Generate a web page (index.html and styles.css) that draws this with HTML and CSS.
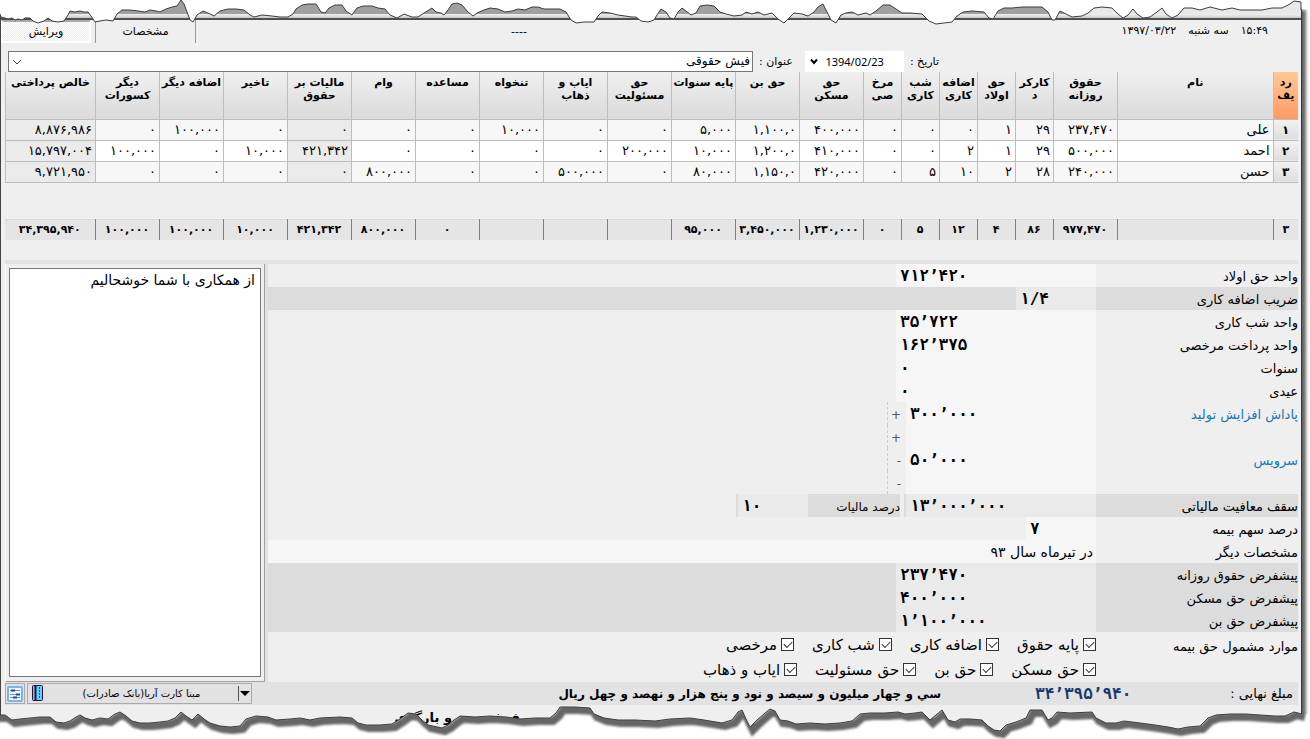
FILE: index.html
```
<!DOCTYPE html>
<html lang="fa" dir="rtl">
<head>
    <meta charset="UTF-8">
    <meta name="viewport" content="width=device-width, initial-scale=1.0">
    <title>فیش حقوقی</title>
    <link rel="stylesheet" href="styles.css">
</head>
<body>
<div class="page">
    <div class="window">
        <div class="titlebar"></div>

        <!-- Tabs and clock -->
        <div class="topbar">
            <div class="clock"><span>۱۵:۴۹</span><span>سه شنبه</span><span>۱۳۹۷/۰۳/۲۲</span></div>
            <div class="dashes">----</div>
            <div class="tabs">
                <button type="button" class="tab">مشخصات</button>
                <button type="button" class="tab tab-active">ویرایش</button>
            </div>
        </div>

        <!-- Date and title -->
        <div class="filters">
            <label for="date">تاریخ :</label>
            <div class="date-box">
                <select id="date"><option>1394/02/23</option></select>
                <svg class="arrow" viewBox="0 0 8 8"><path d="M1 1.5L4 5L7 1.5" fill="none" stroke="#000" stroke-width="2"/></svg>
            </div>
            <label for="title" class="title-label">عنوان :</label>
            <div class="title-box">
                <select id="title"><option>فیش حقوقی</option></select>
                <svg class="arrow" viewBox="0 0 8 8"><path d="M0 2L4 6L8 2" fill="none" stroke="#444"/></svg>
            </div>
        </div>

        <!-- Payroll grid -->
        <table class="grid">
            <colgroup>
                <col class="c-row"><col><col class="c-mid">
                <col class="c-small" span="5">
                <col class="c-mid" span="12">
                <col class="c-net">
            </colgroup>
            <thead>
                <tr>
                    <th class="picked">رد<br>یف</th><th>نام</th><th>حقوق<br>روزانه</th><th>کارکر<br>د</th><th>حق<br>اولاد</th><th>اضافه<br>کاری</th><th>شب<br>کاری</th><th>مرخ<br>صی</th><th>حق<br>مسکن</th><th>حق بن</th><th>پایه سنوات</th><th>حق<br>مسئولیت</th><th>ایاب و<br>ذهاب</th><th>تنخواه</th><th>مساعده</th><th>وام</th><th>مالیات بر<br>حقوق</th><th>تاخیر</th><th>اضافه دیگر</th><th>دیگر<br>کسورات</th><th>خالص پرداختی</th>
                </tr>
            </thead>
            <tbody>
                <tr>
                    <th>۱</th><td>علی</td><td>۲۳۷,۴۷۰</td><td>۲۹</td><td>۱</td><td>۰</td><td>۰</td><td>۰</td><td>۴۰۰,۰۰۰</td><td>۱,۱۰۰,۰</td><td>۵,۰۰۰</td><td>۰</td><td>۰</td><td>۱۰,۰۰۰</td><td>۰</td><td>۰</td><td class="calc">۰</td><td>۰</td><td>۱۰۰,۰۰۰</td><td>۰</td><td class="calc">۸,۸۷۶,۹۸۶</td>
                </tr>
                <tr>
                    <th>۲</th><td>احمد</td><td>۵۰۰,۰۰۰</td><td>۲۹</td><td>۱</td><td>۲</td><td>۰</td><td>۰</td><td>۴۱۰,۰۰۰</td><td>۱,۲۰۰,۰</td><td>۱۰,۰۰۰</td><td>۲۰۰,۰۰۰</td><td>۰</td><td>۰</td><td>۰</td><td>۰</td><td class="calc">۴۲۱,۳۴۲</td><td>۱۰,۰۰۰</td><td>۰</td><td>۱۰۰,۰۰۰</td><td class="calc">۱۵,۷۹۷,۰۰۴</td>
                </tr>
                <tr>
                    <th>۳</th><td>حسن</td><td>۲۴۰,۰۰۰</td><td>۲۸</td><td>۲</td><td>۱۰</td><td>۵</td><td>۰</td><td>۴۲۰,۰۰۰</td><td>۱,۱۵۰,۰</td><td>۸۰,۰۰۰</td><td>۰</td><td>۵۰۰,۰۰۰</td><td>۰</td><td>۰</td><td>۸۰۰,۰۰۰</td><td class="calc">۰</td><td>۰</td><td>۰</td><td>۰</td><td class="calc">۹,۷۲۱,۹۵۰</td>
                </tr>
            </tbody>
        </table>

        <table class="totals">
            <colgroup>
                <col class="c-row"><col><col class="c-mid">
                <col class="c-small" span="5">
                <col class="c-mid" span="12">
                <col class="c-net">
            </colgroup>
            <tbody>
                <tr>
                    <td>۳</td><td></td><td>۹۷۷,۴۷۰</td><td>۸۶</td><td>۴</td><td>۱۲</td><td>۵</td><td>۰</td><td>۱,۲۳۰,۰۰۰</td><td>۳,۴۵۰,۰۰۰</td><td>۹۵,۰۰۰</td><td></td><td></td><td></td><td>۰</td><td>۸۰۰,۰۰۰</td><td>۴۲۱,۳۴۲</td><td>۱۰,۰۰۰</td><td>۱۰۰,۰۰۰</td><td>۱۰۰,۰۰۰</td><td>۳۴,۳۹۵,۹۴۰</td>
                </tr>
            </tbody>
        </table>

        <!-- Details -->
        <div class="details">
            <form class="form">
                <div class="row"><label for="f1">واحد حق اولاد</label><input id="f1" class="num" value="۷۱۲’۴۲۰"></div>
                <div class="row shaded"><label for="f2">ضریب اضافه کاری</label><input id="f2" class="num w80" value="۱/۴"></div>
                <div class="row"><label for="f3">واحد شب کاری</label><input id="f3" class="num" value="۳۵’۷۲۲"></div>
                <div class="row"><label for="f4">واحد پرداخت مرخصی</label><input id="f4" class="num" value="۱۶۲’۳۷۵"></div>
                <div class="row"><label for="f5">سنوات</label><input id="f5" class="num" value="۰"></div>
                <div class="row"><label for="f6">عیدی</label><input id="f6" class="num" value="۰"></div>
                <div class="row"><label for="f7" class="custom">پاداش افزایش تولید</label><input id="f7" class="num w190" value="۳۰۰’۰۰۰"><span class="sign">+</span></div>
                <div class="row"><label for="f8" class="custom"></label><input id="f8" class="num w190"><span class="sign">+</span></div>
                <div class="row"><label for="f9" class="custom">سرویس</label><input id="f9" class="num w190" value="۵۰’۰۰۰"><span class="sign">-</span></div>
                <div class="row"><label for="f10" class="custom"></label><input id="f10" class="num w190"><span class="sign">-</span></div>
                <div class="row tax">
                    <label for="f11">سقف معافیت مالیاتی</label><input id="f11" class="num w190 edged" value="۱۳’۰۰۰’۰۰۰">
                    <label for="f12" class="second">درصد مالیات</label><input id="f12" class="num w70 edged" value="۱۰">
                </div>
                <div class="row"><label for="f13">درصد سهم بیمه</label><input id="f13" class="num w70" value="۷"></div>
                <div class="row"><label for="f14">مشخصات دیگر</label><input id="f14" class="text" value="در تیرماه سال ۹۳"></div>
                <div class="row shaded"><label for="f15">پیشفرض حقوق روزانه</label><input id="f15" class="num" value="۲۳۷’۴۷۰"></div>
                <div class="row shaded"><label for="f16">پیشفرض حق مسکن</label><input id="f16" class="num" value="۴۰۰’۰۰۰"></div>
                <div class="row shaded"><label for="f17">پیشفرض حق بن</label><input id="f17" class="num" value="۱’۱۰۰’۰۰۰"></div>
                <div class="insured">
                    <span class="insured-title">موارد مشمول حق بیمه</span>
                    <div class="checks">
                        <div class="check-line">
                            <label><input type="checkbox" checked>پایه حقوق</label>
                            <label><input type="checkbox" checked>اضافه کاری</label>
                            <label><input type="checkbox" checked>شب کاری</label>
                            <label><input type="checkbox" checked>مرخصی</label>
                        </div>
                        <div class="check-line">
                            <label><input type="checkbox" checked>حق مسکن</label>
                            <label><input type="checkbox" checked>حق بن</label>
                            <label><input type="checkbox" checked>حق مسئولیت</label>
                            <label><input type="checkbox" checked>ایاب و ذهاب</label>
                        </div>
                    </div>
                </div>
            </form>
            <div class="note">
                <textarea aria-label="یادداشت">از همکاری با شما خوشحالیم</textarea>
            </div>
        </div>

        <!-- Final amount -->
        <div class="footer">
            <span class="final-label">مبلغ نهایی :</span>
            <span class="final-number" dir="ltr">۳۴’۳۹۵’۹۴۰</span>
            <span class="final-words">سي و چهار ميليون و سيصد و نود و پنج هزار و نهصد و چهل ريال</span>
            <div class="bank">
                <select id="bank" aria-label="بانک"><option>مبنا کارت آریا(بانک صادرات)</option></select>
                <svg class="bank-arrow" viewBox="0 0 12 15"><path d="M.5 0V15" stroke="#555"/><path d="M2 5H12L7 10Z"/></svg>
                <svg class="bank-icon" viewBox="0 0 11 16"><rect x=".5" y=".5" width="10" height="15" rx="1" fill="#5ad2fa" stroke="#2a1038"/><path d="M3.500 1V15" stroke="#2a1038" stroke-width="2"/><path d="M7.500 2V14" stroke="#14506e" stroke-dasharray="2 1"/></svg>
            </div>
            <button type="button" class="options" aria-label="تنظیمات">
                <svg viewBox="0 0 16 16"><rect x="1" y="1" width="14" height="14" rx="1" fill="#eef6fd" stroke="#7ab4ec" stroke-width="2"/><path d="M3 4.500H13M3 8.500H13M3 11.500H13" stroke="#7390b8"/><path d="M4 3.500H8V5.500H4ZM9 7.500H13V9.500H9ZM6 10.500H10V12.500H6Z" fill="#1f4f90"/></svg>
            </button>
        </div>
        <div class="next-line">فیش بیمه و بارگری</div>
    </div>

    <!-- Torn top edge -->
    <svg class="torn torn-top" viewBox="0 0 1310 28" preserveAspectRatio="none">
        <path fill="#fff" d="M0 0L0 14L1 17L5 18L8 19L12 18L15 20L18 19L22 20L25 18L30 18L33 21L38 23L44 21L48 18L52 21L58 22L64 21L68 15L70 11L75 12L80 11L84 12L88 12L91 16L95 22L100 21L106 20L113 21L117 14L122 10L130 10L138 11L145 12L150 10L156 11L160 12L166 9L172 7L177 6L181 0L184 4L187 12L190 20L193 22L197 15L203 11L208 13L214 16L220 11L228 9L236 9L244 10L250 15L254 17L262 15L272 16L280 17L288 17L293 14L296 9L302 5L308 4L316 4L321 12L325 13L329 8L335 5L342 5L346 11L352 15L357 8L363 6L372 6L378 8L385 9L390 15L397 18L404 14L412 17L418 17L424 13L432 8L436 12L441 13L444 15L448 10L452 4L457 3L462 5L468 12L473 16L477 13L484 10L490 8L498 9L505 12L512 11L518 9L525 10L532 7L538 7L544 9L552 9L560 9L566 12L571 20L576 23L584 22L594 22L598 16L602 12L610 13L618 15L625 16L632 17L636 17L641 21L648 22L654 20L657 15L661 9L666 12L670 18L674 19L678 12L682 8L686 11L691 15L696 13L700 6L707 5L714 6L720 12L726 14L734 16L742 15L746 12L752 14L758 12L764 15L772 13L778 19L784 23L790 17L794 13L802 14L808 16L814 12L818 7L823 4L826 10L831 20L836 23L841 15L846 13L852 12L858 15L866 13L870 15L876 11L883 5L890 5L896 9L902 13L910 13L922 14L929 21L936 24L944 23L952 22L957 16L963 12L972 11L984 12L989 18L993 19L998 11L1004 8L1012 8L1022 7L1032 7L1042 7L1048 12L1052 20L1055 20L1060 11L1064 13L1072 17L1082 16L1088 13L1094 8L1102 7L1112 8L1118 14L1123 18L1128 15L1133 9L1137 14L1143 18L1150 17L1157 12L1162 8L1166 14L1172 18L1178 15L1184 8L1192 8L1200 10L1210 7L1222 10L1232 8L1240 10L1250 10L1262 10L1272 8L1282 8L1290 4L1294 1L1301 2V9H1310V0Z"/>
        <path fill="none" stroke="#3c3c3c" d="M0 14L1 17L5 18L8 19L12 18L15 20L18 19L22 20L25 18L30 18L33 21L38 23L44 21L48 18L52 21L58 22L64 21L68 15L70 11L75 12L80 11L84 12L88 12L91 16L95 22L100 21L106 20L113 21L117 14L122 10L130 10L138 11L145 12L150 10L156 11L160 12L166 9L172 7L177 6L181 0L184 4L187 12L190 20L193 22L197 15L203 11L208 13L214 16L220 11L228 9L236 9L244 10L250 15L254 17L262 15L272 16L280 17L288 17L293 14L296 9L302 5L308 4L316 4L321 12L325 13L329 8L335 5L342 5L346 11L352 15L357 8L363 6L372 6L378 8L385 9L390 15L397 18L404 14L412 17L418 17L424 13L432 8L436 12L441 13L444 15L448 10L452 4L457 3L462 5L468 12L473 16L477 13L484 10L490 8L498 9L505 12L512 11L518 9L525 10L532 7L538 7L544 9L552 9L560 9L566 12L571 20L576 23L584 22L594 22L598 16L602 12L610 13L618 15L625 16L632 17L636 17L641 21L648 22L654 20L657 15L661 9L666 12L670 18L674 19L678 12L682 8L686 11L691 15L696 13L700 6L707 5L714 6L720 12L726 14L734 16L742 15L746 12L752 14L758 12L764 15L772 13L778 19L784 23L790 17L794 13L802 14L808 16L814 12L818 7L823 4L826 10L831 20L836 23L841 15L846 13L852 12L858 15L866 13L870 15L876 11L883 5L890 5L896 9L902 13L910 13L922 14L929 21L936 24L944 23L952 22L957 16L963 12L972 11L984 12L989 18L993 19L998 11L1004 8L1012 8L1022 7L1032 7L1042 7L1048 12L1052 20L1055 20L1060 11L1064 13L1072 17L1082 16L1088 13L1094 8L1102 7L1112 8L1118 14L1123 18L1128 15L1133 9L1137 14L1143 18L1150 17L1157 12L1162 8L1166 14L1172 18L1178 15L1184 8L1192 8L1200 10L1210 7L1222 10L1232 8L1240 10L1250 10L1262 10L1272 8L1282 8L1290 4L1294 1L1301 2V10"/>
    </svg>

    <!-- Torn bottom edge with its shadow -->
    <svg class="torn torn-bottom" viewBox="0 700 1310 39" preserveAspectRatio="none">
        <defs>
            <path id="edge" d="M-20 715L0 715L5 715L12 720L20 719L30 718L40 717L50 717L56 722L64 723L70 721L76 717L80 715L85 718L92 720L100 718L108 719L115 714L120 712L126 716L132 721L140 723L150 723L160 722L168 721L175 718L181 712L186 716L192 720L198 714L204 719L210 723L220 726L230 727L240 726L246 719L256 716L268 717L276 720L290 719L300 718L310 720L320 718L340 717L352 718L358 723L366 725L380 725L392 724L400 719L408 713L416 714L422 720L428 725L442 728L448 725L454 720L460 716L475 717L490 716L506 717L520 719L535 718L550 718L556 713L560 707L575 707L590 708L594 714L604 718L618 720L635 720L655 721L670 719L690 718L704 720L722 723L732 720L738 712L742 710L746 719L750 727L757 720L765 713L770 709L775 711L780 720L788 721L796 724L810 723L825 724L840 723L852 721L860 714L870 713L885 713L898 712L905 714L915 713L922 712L930 720L936 715L942 710L948 720L955 722L960 719L970 719L982 720L988 726L994 730L1000 731L1006 725L1016 722L1026 718L1030 710L1042 710L1048 720L1052 718L1057 712L1070 713L1092 712L1096 718L1106 723L1116 723L1124 721L1140 723L1155 725L1168 727L1178 729L1188 727L1200 726L1208 718L1216 715L1230 714L1246 714L1260 715L1275 716L1285 716L1294 712L1302 714"/>
            <clipPath id="below"><path d="M0 715L5 715L12 720L20 719L30 718L40 717L50 717L56 722L64 723L70 721L76 717L80 715L85 718L92 720L100 718L108 719L115 714L120 712L126 716L132 721L140 723L150 723L160 722L168 721L175 718L181 712L186 716L192 720L198 714L204 719L210 723L220 726L230 727L240 726L246 719L256 716L268 717L276 720L290 719L300 718L310 720L320 718L340 717L352 718L358 723L366 725L380 725L392 724L400 719L408 713L416 714L422 720L428 725L442 728L448 725L454 720L460 716L475 717L490 716L506 717L520 719L535 718L550 718L556 713L560 707L575 707L590 708L594 714L604 718L618 720L635 720L655 721L670 719L690 718L704 720L722 723L732 720L738 712L742 710L746 719L750 727L757 720L765 713L770 709L775 711L780 720L788 721L796 724L810 723L825 724L840 723L852 721L860 714L870 713L885 713L898 712L905 714L915 713L922 712L930 720L936 715L942 710L948 720L955 722L960 719L970 719L982 720L988 726L994 730L1000 731L1006 725L1016 722L1026 718L1030 710L1042 710L1048 720L1052 718L1057 712L1070 713L1092 712L1096 718L1106 723L1116 723L1124 721L1140 723L1155 725L1168 727L1178 729L1188 727L1200 726L1208 718L1216 715L1230 714L1246 714L1260 715L1275 716L1285 716L1294 712L1302 714H1310V739H0Z"/></clipPath>
            <filter id="soft" x="-1%" y="-30%" width="102%" height="160%"><feGaussianBlur stdDeviation="1"/></filter>
        </defs>
        <g clip-path="url(#below)">
            <rect y="700" width="1310" height="39" fill="#fff"/>
            <g filter="url(#soft)">
                <use href="#edge" x="3" y="3" fill="none" stroke="#666" stroke-width="8"/>
            </g>
        </g>
        <use href="#edge" fill="none" stroke="#3c3c3c"/>
    </svg>
</div>
</body>
</html>
```
FILE: styles.css
```
* {
    box-sizing: border-box;
}

body {
    margin: 0;
    background: #fff;
    font-family: "DejaVu Sans", sans-serif;
    font-size: 11px;
    color: #000;
}

input,
select,
textarea,
button {
    font-family: inherit;
    font-size: inherit;
    color: inherit;
    margin: 0;
    border: 0;
    border-radius: 0;
}

.page {
    position: relative;
    overflow: hidden;
    padding-right: 8px;
}

.window {
    background: #efefef;
    border-left: 1px solid #444;
    border-right: 1px solid #333;
    box-shadow: 4px 10px 3px #666;
}

.titlebar {
    height: 20px;
    background:
        linear-gradient(#e8e8e8, #e8e8e8) right top / 214px 14px no-repeat,
        linear-gradient(#a0a0a0 14px, #f2f2f2 14px, #c8c8c8 18px, #505050 18px);
}

/* Tabs and clock */
.topbar {
    display: flex;
    height: 30px;
    padding-right: 33px;
}

.clock {
    display: flex;
    gap: 12px;
    width: 200px;
    line-height: 22px;
}

.dashes {
    flex: 1;
    padding-right: 541px;
    line-height: 24px;
}

.tabs {
    display: flex;
    height: 23px;
}

.tab {
    width: 101px;
    padding: 0;
    background: #efefef;
    border-left: 1px solid #999;
    border-right: 1px solid #999;
    cursor: pointer;
}

.tab-active {
    width: 90px;
    margin-right: 4px;
    border: 2px solid #fff;
    border-top-color: #aaa;
    background: repeating-conic-gradient(#fff 0 25%, #ececec 0 50%) 0 0 / 2px 2px;
}

/* Date and title */
.filters {
    display: flex;
    align-items: center;
    height: 22px;
    padding-right: 362px;
    padding-left: 7px;
}

.date-box,
.title-box {
    position: relative;
    height: 21px;
}

.date-box {
    width: 99px;
    margin-right: 6px;
}

.title-label {
    margin-right: 12px;
}

.title-box {
    flex: 1;
    margin-right: 6px;
}

.filters select {
    display: block;
    width: 100%;
    height: 100%;
    padding: 0 2px;
    background: #fff;
    appearance: none;
}

.date-box select {
    padding-right: 20px;
    font-family: "Noto Sans", sans-serif;
}

.title-box select {
    border: 1px solid #777;
    font-size: 12px;
}

.arrow {
    position: absolute;
    left: 5px;
    top: 7px;
    width: 8px;
    height: 8px;
}

/* Payroll grid */
.grid,
.totals {
    width: calc(100% - 7px);
    margin-right: 3px;
    margin-left: 4px;
    table-layout: fixed;
    border-collapse: collapse;
}

.c-row {
    width: 25px;
}

.c-small {
    width: 38px;
}

.c-mid {
    width: 64px;
}

.c-net {
    width: 90px;
}

.grid th,
.grid td {
    border: 1px solid #bdbdbd;
    padding: 0 3px;
    white-space: nowrap;
}

.grid thead th {
    height: 47px;
    padding: 4px 0 0;
    border-top: 0;
    vertical-align: top;
    line-height: 13px;
    font-size: 11px;
    background: linear-gradient(#f0f0f0, #dadada);
}

.grid thead .picked {
    background: linear-gradient(#ffc896, #ff9a66);
}

.grid th:first-child {
    border-right: 0;
}

.grid tbody th {
    padding: 0;
    background: linear-gradient(#f2f2f2, #dedede);
    font-size: 12px;
}

.grid td {
    height: 21px;
    font-size: 13px;
    line-height: 20px;
    background: #f7f7f7;
}

.grid tr:nth-child(2) td {
    background: #fff;
}

.grid .calc,
.grid tr:nth-child(2) .calc {
    background: #ebebeb;
}

.totals {
    margin-top: 36px;
    border-top: 1px solid #dadada;
    background: #e5e5e5;
}

.totals td {
    height: 21px;
    padding: 0;
    text-align: center;
    font-size: 11px;
    font-weight: bold;
    white-space: nowrap;
    border-left: 1px solid #808080;
}

.totals td:last-child {
    border-left: 0;
}

/* Details */
.details {
    display: flex;
    margin: 20px 3px 0 4px;
    border-top: 4px solid #e2e2e2;
}

.form {
    flex: 1;
    border-left: 3px solid #e2e2e2;
    font-size: 13px;
}

.row {
    display: flex;
    height: 23px;
}

.row label {
    width: 202px;
    line-height: 26px;
}

.row .custom {
    color: #1478b4;
}

.shaded {
    background: #dcdcdc;
}

.row input {
    height: 23px;
    background: #f6f6f6;
}

.shaded input,
.tax input {
    background: #eaeaea;
}

.num {
    width: 200px;
    padding: 0 4px;
    direction: ltr;
    font-family: "DejaVu Sans Mono", monospace;
    font-size: 16px;
    font-weight: bold;
}

.w190 {
    width: 190px;
}

.w80 {
    width: 80px;
}

.w70 {
    width: 70px;
}

.text {
    flex: 1;
    padding: 0 3px;
    font-size: 14px;
}

.sign {
    width: 19px;
    padding-right: 5px;
    border-left: 1px dashed #ccc;
    line-height: 26px;
    font-size: 12px;
    color: #556;
}

.tax label {
    background: #dcdcdc;
}

.tax .edged {
    box-sizing: content-box;
    width: 182px;
    border-left: 2px solid #dcdcdc;
}

.tax .w70 {
    width: 62px;
}

.tax .second {
    width: 92px;
    margin-right: 4px;
    font-size: 12px;
}

.insured {
    display: flex;
    height: 50px;
}

.insured-title {
    width: 202px;
    line-height: 30px;
}

.checks {
    font-size: 15px;
}

.check-line {
    display: flex;
    gap: 18px;
    height: 25px;
}

.check-line label {
    display: flex;
    align-items: center;
    gap: 4px;
}

.check-line input {
    appearance: none;
    position: relative;
    width: 13px;
    height: 13px;
    border: 1px solid #333;
    background: #fff;
}

.check-line input:checked::after {
    content: "";
    position: absolute;
    left: 2px;
    top: 2px;
    width: 7px;
    height: 4px;
    border-left: 1px solid #333;
    border-bottom: 1px solid #333;
    transform: rotate(-45deg);
}

.note {
    display: flex;
    width: 260px;
    padding: 4px 3px;
    border-left: 1px solid #fff;
    border-right: 1px solid #a0a0a0;
    border-bottom: 1px solid #a0a0a0;
}

.note textarea {
    width: 100%;
    padding: 3px 5px;
    border: 1px solid #777;
    background: #fff;
    font-size: 14px;
    resize: none;
}

/* Final amount */
.footer {
    display: flex;
    align-items: center;
    height: 23px;
    margin: 0 3px 0 4px;
    padding-right: 5px;
    background: #e2e2e2;
    font-size: 13px;
}

.final-label {
    width: 164px;
}

.final-number {
    width: 94px;
    font-family: "DejaVu Sans Mono", monospace;
    font-size: 16px;
    font-weight: bold;
    color: #14386e;
}

.final-words {
    flex: 1;
    padding-right: 94px;
    font-size: 12px;
    font-weight: bold;
    white-space: nowrap;
}

.bank {
    position: relative;
    width: 225px;
    height: 21px;
}

.bank select {
    width: 100%;
    height: 100%;
    padding: 0 16px 0 20px;
    border: 1px solid #aaa;
    background: #e2e2e2;
    font-size: 10px;
    text-align: center;
    text-align-last: center;
    appearance: none;
}

.bank-arrow {
    position: absolute;
    right: 2px;
    top: 3px;
    width: 12px;
    height: 15px;
}

.bank-icon {
    position: absolute;
    left: 5px;
    top: 2px;
    width: 11px;
    height: 16px;
}

.options {
    display: flex;
    align-items: center;
    justify-content: center;
    width: 20px;
    height: 21px;
    margin-right: 2px;
    padding: 0;
    border: 1px solid #aaa;
    background: #e2e2e2;
}

.options svg {
    width: 16px;
    height: 16px;
}

.next-line {
    height: 34px;
    padding-right: 781px;
    line-height: 26px;
    font-size: 13px;
    font-weight: bold;
}

/* Torn edges lie over the window */
.torn {
    position: absolute;
    left: 0;
    width: 100%;
}

.torn-top {
    top: 0;
    height: 28px;
}

.torn-bottom {
    bottom: 0;
    height: 39px;
}
```
